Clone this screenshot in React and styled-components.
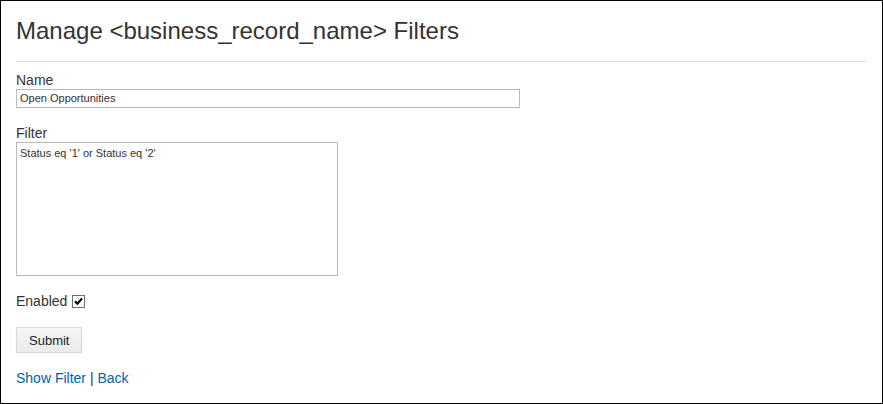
import React from "react";
import styled, { createGlobalStyle } from "styled-components";

const GlobalStyle = createGlobalStyle`
  *, *::before, *::after { box-sizing: border-box; }
  body {
    margin: 0;
    background: #fff;
    color: #333;
    font: 14px/17px "Liberation Sans", Arial, sans-serif;
  }
`;

const Page = styled.main`
  min-height: 100vh;
  padding: 15px;
  border: 1px solid #000;
`;

const Title = styled.h1`
  margin: 0 0 10px;
  padding-bottom: 15px;
  border-bottom: 1px solid #e2e2e2;
  font-size: 24px;
  line-height: 30px;
  font-weight: 400;
`;

const Form = styled.form`
  display: flex;
  flex-direction: column;
  align-items: flex-start;
  gap: 17px;
`;

const Field = styled.div`
  display: flex;
  flex-direction: column;
  align-items: flex-start;
  width: 100%;
  max-width: ${({ $maxWidth }) => $maxWidth};
`;

const Label = styled.label`
  display: block;
`;

const TextInput = styled.input`
  width: 100%;
  height: 19px;
  margin: 0;
  padding: 0 3px 2px;
  border: 1px solid #bababa;
  border-radius: 0;
  background: #fff;
  color: #333;
  font: 11px/15px "Liberation Sans", Arial, sans-serif;
`;

const TextArea = styled.textarea`
  display: block;
  width: 100%;
  height: 134px;
  margin: 0;
  padding: 3px;
  border: 1px solid #bababa;
  border-radius: 0;
  background: #fff;
  color: #333;
  font: 11px/15px "Liberation Sans", Arial, sans-serif;
  resize: none;
`;

const CheckRow = styled.div`
  display: flex;
  align-items: center;
  gap: 5px;
`;

const Checkbox = styled.input`
  appearance: none;
  width: 13px;
  height: 13px;
  margin: 0;
  border: 1px solid #707070;
  border-radius: 0;
  background: #fff;

  &:checked {
    background: #fff
      url("data:image/svg+xml,%3Csvg xmlns='http://www.w3.org/2000/svg' viewBox='0 0 11 11'%3E%3Cpath d='M2 5.2L4.4 7.8L9 2.5' fill='none' stroke='%23000' stroke-width='2.1'/%3E%3C/svg%3E")
      center / 11px 11px no-repeat;
  }
`;

const SubmitButton = styled.button`
  height: 26px;
  margin: 0;
  padding: 0 12px;
  border: 1px solid #d9d9d9;
  border-radius: 0;
  background: linear-gradient(#f5f5f5, #ebebeb);
  box-shadow: 0 1px 2px rgba(0, 0, 0, 0.06);
  color: #222;
  font: 13px/17px "Liberation Sans", Arial, sans-serif;
  cursor: pointer;
`;

const Links = styled.nav`
  margin-top: 17px;
`;

const Link = styled.a`
  color: #0066a1;
  text-decoration: none;

  &:hover { text-decoration: underline; }
`;

export default function App() {
  return (
    <>
      <GlobalStyle />
      <Page>
        <Title>Manage &lt;business_record_name&gt; Filters</Title>
        <Form onSubmit={(event) => event.preventDefault()}>
          <Field $maxWidth="504px">
            <Label htmlFor="name">Name</Label>
            <TextInput id="name" type="text" defaultValue="Open Opportunities" />
          </Field>
          <Field $maxWidth="322px">
            <Label htmlFor="filter">Filter</Label>
            <TextArea
              id="filter"
              spellCheck={false}
              defaultValue="Status eq '1' or Status eq '2'"
            />
          </Field>
          <CheckRow>
            <Label htmlFor="enabled">Enabled</Label>
            <Checkbox id="enabled" type="checkbox" defaultChecked />
          </CheckRow>
          <SubmitButton type="submit">Submit</SubmitButton>
        </Form>
        <Links>
          <Link href="#show-filter">Show Filter</Link> | <Link href="#back">Back</Link>
        </Links>
      </Page>
    </>
  );
}
